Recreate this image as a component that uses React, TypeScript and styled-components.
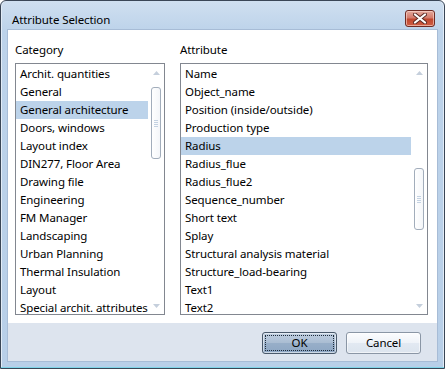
import React from "react";
import styled, { createGlobalStyle } from "styled-components";

const Global = createGlobalStyle`
  html, body { margin: 0; padding: 0; background: #ffffff; }
  * { box-sizing: border-box; }
  body { font-family: "Noto Sans", "Open Sans", sans-serif; font-size: 11.5px; letter-spacing: -0.1px; color: #000; }
`;

const Frame = styled.div`
  width: 445px;
  height: 369px;
  border: 1px solid #3a4656;
  border-radius: 6px 6px 0 0;
  background: linear-gradient(#cfdff0 0px, #bdd3ea 30px, #b8cfe8 100%);
  box-shadow: inset 0 -1px 0 #7fd4e8, inset 1px 0 0 #e2ecf7, inset -1px 0 0 #e2ecf7;
  display: flex;
  flex-direction: column;
  padding: 0 7px 7px 7px;
`;

const TitleBar = styled.div`
  height: 29px;
  display: flex;
  align-items: flex-start;
  justify-content: space-between;
  padding: 10px 2px 0 4px;
`;

const Title = styled.span`
  font-size: 11.5px;
  line-height: 16px;
  margin-top: 1px;
`;

const CloseButton = styled.div`
  width: 30px;
  height: 17px;
  margin-top: -1px;
  border: 1px solid #6e2b24;
  border-radius: 3px;
  background: linear-gradient(#e3a99d 0%, #d47b6c 45%, #c0472f 55%, #cf5e44 100%);
  box-shadow: inset 0 0 0 1px rgba(255, 220, 210, 0.6);
  display: flex;
  align-items: center;
  justify-content: center;
`;

const Client = styled.div`
  flex: 1;
  display: flex;
  flex-direction: column;
  box-shadow: 0 0 0 1px #a7bcd6;
`;

const Body = styled.div`
  height: 293px;
  background: #ffffff;
  display: flex;
  padding: 12px 9px 8px 7px;
  gap: 15px;
`;

const Column = styled.div<{ $w: number }>`
  width: ${(p) => p.$w}px;
  display: flex;
  flex-direction: column;
`;

const Label = styled.div`
  height: 16px;
  line-height: 16px;
  margin-bottom: 5px;
`;

const ListBox = styled.div`
  flex: 1;
  border: 1px solid #828790;
  display: flex;
  overflow: hidden;
`;

const Items = styled.div`
  flex: 1;
  padding-top: 1px;
  overflow: hidden;
`;

const Item = styled.div<{ $sel?: boolean }>`
  height: 18px;
  line-height: 18px;
  padding-left: 4px;
  white-space: nowrap;
  overflow: hidden;
  background: ${(p) => (p.$sel ? "#bcd3ea" : "transparent")};
`;

const ScrollBar = styled.div`
  width: 16px;
  display: flex;
  flex-direction: column;
  align-items: center;
  background: #ffffff;
`;

const Arrow = styled.div`
  height: 17px;
  width: 16px;
  display: flex;
  align-items: center;
  justify-content: center;
`;

const Track = styled.div`
  flex: 1;
  width: 100%;
  display: flex;
  flex-direction: column;
  align-items: center;
`;

const Thumb = styled.div`
  width: 10px;
  border: 1px solid #a2adbb;
  border-radius: 3px;
  background: linear-gradient(90deg, #ffffff, #f4f6f9);
  display: flex;
  align-items: center;
  justify-content: center;
`;

const Grip = styled.div`
  width: 4px;
  height: 7px;
  background: repeating-linear-gradient(#c4d2e2 0 1px, transparent 1px 2px);
`;

const Footer = styled.div`
  flex: 1;
  background: #dde4ee;
  display: flex;
  justify-content: flex-end;
  align-items: flex-start;
  padding: 9px 16px 0 0;
  gap: 9px;
`;

const Button = styled.div<{ $def?: boolean }>`
  width: 75px;
  height: 22px;
  border-radius: 3px;
  border: 1px solid ${(p) => (p.$def ? "#49596b" : "#8a96a5")};
  background: ${(p) =>
    p.$def
      ? "linear-gradient(#c0cfe0 0%, #a9bcd2 50%, #97aec8 51%, #8ea7c4 100%)"
      : "linear-gradient(#fbfcfe 0%, #eff3f8 50%, #e2e9f2 51%, #dce4ee 100%)"};
  box-shadow: inset 0 0 0 1px rgba(255, 255, 255, 0.55);
  display: flex;
  align-items: center;
  justify-content: center;
  padding: 2px;
`;

const Focus = styled.div<{ $on?: boolean }>`
  width: 100%;
  height: 100%;
  border: 1px dotted ${(p) => (p.$on ? "#1e2a38" : "transparent")};
  display: flex;
  align-items: center;
  justify-content: center;
  line-height: 14px;
`;

const UpArrow = () => (
  <svg width="7" height="4" viewBox="0 0 7 4">
    <polygon points="0,4 7,4 3.5,0" fill="#c5cfdc" />
  </svg>
);
const DownArrow = () => (
  <svg width="7" height="4" viewBox="0 0 7 4">
    <polygon points="0,0 7,0 3.5,4" fill="#c5cfdc" />
  </svg>
);

const Scroller = ({ top, height }: { top: number; height: number }) => (
  <ScrollBar>
    <Arrow>
      <UpArrow />
    </Arrow>
    <Track>
      <Thumb style={{ marginTop: top, height }}>
        <Grip />
      </Thumb>
    </Track>
    <Arrow>
      <DownArrow />
    </Arrow>
  </ScrollBar>
);

const categories = [
  "Archit. quantities",
  "General",
  "General architecture",
  "Doors, windows",
  "Layout index",
  "DIN277, Floor Area",
  "Drawing file",
  "Engineering",
  "FM Manager",
  "Landscaping",
  "Urban Planning",
  "Thermal Insulation",
  "Layout",
  "Special archit. attributes",
];

const attributes = [
  "Name",
  "Object_name",
  "Position (inside/outside)",
  "Production type",
  "Radius",
  "Radius_flue",
  "Radius_flue2",
  "Sequence_number",
  "Short text",
  "Splay",
  "Structural analysis material",
  "Structure_load-bearing",
  "Text1",
  "Text2",
];

export default function App() {
  return (
    <>
      <Global />
      <Frame>
        <TitleBar>
          <Title>Attribute Selection</Title>
          <CloseButton>
            <svg width="14" height="11" viewBox="0 0 14 11">
              <path
                d="M2 1.5 L12 9.5 M12 1.5 L2 9.5"
                stroke="#5a2a24"
                strokeWidth="4"
                strokeLinecap="round"
              />
              <path
                d="M2 1.5 L12 9.5 M12 1.5 L2 9.5"
                stroke="#ffffff"
                strokeWidth="2.2"
                strokeLinecap="round"
              />
            </svg>
          </CloseButton>
        </TitleBar>
        <Client>
          <Body>
            <Column $w={150}>
              <Label>Category</Label>
              <ListBox>
                <Items>
                  {categories.map((c) => (
                    <Item key={c} $sel={c === "General architecture"}>
                      {c}
                    </Item>
                  ))}
                </Items>
                <Scroller top={6} height={72} />
              </ListBox>
            </Column>
            <Column $w={248}>
              <Label>Attribute</Label>
              <ListBox>
                <Items>
                  {attributes.map((a) => (
                    <Item key={a} $sel={a === "Radius"}>
                      {a}
                    </Item>
                  ))}
                </Items>
                <Scroller top={87} height={62} />
              </ListBox>
            </Column>
          </Body>
          <Footer>
            <Button $def>
              <Focus $on>OK</Focus>
            </Button>
            <Button>
              <Focus>Cancel</Focus>
            </Button>
          </Footer>
        </Client>
      </Frame>
    </>
  );
}
